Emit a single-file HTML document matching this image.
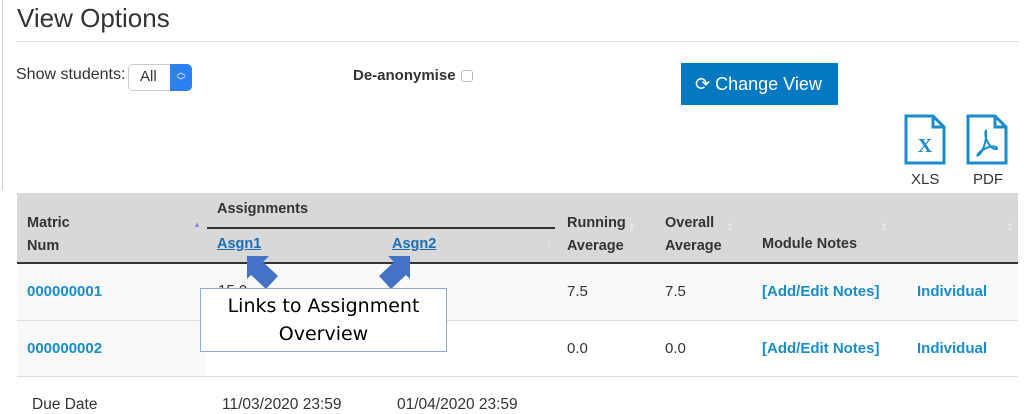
<!DOCTYPE html>
<html><head><meta charset="utf-8"><style>
*{margin:0;padding:0;box-sizing:border-box}
body{width:1024px;height:412px;background:#fff;font-family:"Liberation Sans",sans-serif;position:relative;overflow:hidden;color:#333}
.a{position:absolute;white-space:nowrap}
.lnk{color:#1a8ccc;font-weight:bold;font-size:15px}
.h{font-weight:bold;font-size:14.5px;color:#333}
.s{font-size:15px;color:#333}
</style></head><body>
<div class="a" style="left:2px;top:0;width:1px;height:190px;background:#ccc"></div>
<div class="a" style="left:17px;top:3px;font-size:26px;color:#333">View Options</div>
<div class="a" style="left:16px;top:41px;width:1003px;height:1px;background:#ddd"></div>
<div class="a s" style="left:16px;top:66px;font-size:16px">Show students:</div>
<div class="a" style="left:128px;top:64px;width:64px;height:27px;border:1px solid #ccc;border-radius:5px;background:#fff"></div>
<div class="a s" style="left:140px;top:68px">All</div>
<div class="a" style="left:170px;top:64px;width:22px;height:27px;background:#2d7ff5;border-radius:0 5px 5px 0;color:#fff;font-size:9px;text-align:center;line-height:9px;padding-top:4px">︿<br>﹀</div>
<div class="a h" style="left:353px;top:67px;font-size:15px">De-anonymise</div>
<div class="a" style="left:461px;top:70px;width:12px;height:12px;border:1px solid #bbb;border-radius:3px"></div>
<div class="a" style="left:681px;top:63px;width:157px;height:42px;background:#0479c1;color:#fff;font-size:18px;line-height:42px;padding-left:14px">⟳ Change View</div>
<svg class="a" style="left:903px;top:114px" width="44" height="52" viewBox="0 0 44 52"><path d="M3 2H30L41 13V49H3Z" fill="#fff" stroke="#1a8ccc" stroke-width="3"/><path d="M30 2V13H41" fill="none" stroke="#1a8ccc" stroke-width="3"/><text x="22" y="38" font-family="Liberation Serif" font-weight="bold" font-size="20" fill="#1a8ccc" text-anchor="middle">X</text></svg>
<svg class="a" style="left:965px;top:114px" width="44" height="52" viewBox="0 0 44 52"><path d="M3 2H30L41 13V49H3Z" fill="#fff" stroke="#1a8ccc" stroke-width="3"/><path d="M30 2V13H41" fill="none" stroke="#1a8ccc" stroke-width="3"/><path d="M21 16C19 22 22 28 26 33C30 36 34 36 31 33C28 31 18 34 13 40C11 43 14 42 17 37C19 33 22 26 21 16Z" fill="none" stroke="#1a8ccc" stroke-width="2"/></svg>
<div class="a s" style="left:911px;top:171px">XLS</div>
<div class="a s" style="left:973px;top:171px">PDF</div>
<div class="a" style="left:17px;top:193px;width:1001px;height:70px;background:#d8d8d8"></div>
<div class="a" style="left:17px;top:262px;width:1001px;height:2px;background:#333"></div>
<div class="a" style="left:17px;top:264px;width:1001px;height:56px;background:#f9f9f9"></div>
<div class="a" style="left:17px;top:320px;width:189px;height:56px;background:#f9f9f9"></div>
<div class="a" style="left:17px;top:320px;width:1001px;height:1px;background:#ddd"></div>
<div class="a" style="left:17px;top:376px;width:1001px;height:1px;background:#ddd"></div>
<div class="a h" style="left:27px;top:212px;line-height:23px">Matric<br>Num</div>
<div class="a" style="left:193px;top:220px;font-size:8px;color:#8d86e0">▲</div>
<div class="a h" style="left:217px;top:201px">Assignments</div>
<div class="a" style="left:207px;top:227px;width:348px;height:2px;background:#333"></div>
<div class="a lnk" style="left:217px;top:236px;color:#1a6fb8;text-decoration:underline;font-size:14.5px">Asgn1</div>
<div class="a lnk" style="left:392px;top:236px;color:#1a6fb8;text-decoration:underline;font-size:14.5px">Asgn2</div>
<div class="a h" style="left:567px;top:212px;line-height:23px">Running<br>Average</div>
<div class="a h" style="left:665px;top:212px;line-height:23px">Overall<br>Average</div>
<div class="a h" style="left:762px;top:236px">Module Notes</div>
<div class="a" style="left:628px;top:222px;color:#eee;font-size:9px">⇕</div>
<div class="a" style="left:726px;top:222px;color:#eee;font-size:9px">⇕</div>
<div class="a" style="left:880px;top:222px;color:#eee;font-size:9px">⇕</div>
<div class="a" style="left:1006px;top:222px;color:#eee;font-size:9px">⇕</div>
<div class="a" style="left:545px;top:240px;color:#e4e4e4;font-size:9px">⇕</div>
<div class="a lnk" style="left:27px;top:283px">000000001</div>
<div class="a lnk" style="left:27px;top:340px">000000002</div>
<div class="a s" style="left:567px;top:283px">7.5</div>
<div class="a s" style="left:665px;top:283px">7.5</div>
<div class="a s" style="left:567px;top:340px">0.0</div>
<div class="a s" style="left:665px;top:340px">0.0</div>
<div class="a lnk" style="left:762px;top:283px">[Add/Edit Notes]</div>
<div class="a lnk" style="left:917px;top:283px">Individual</div>
<div class="a lnk" style="left:762px;top:340px">[Add/Edit Notes]</div>
<div class="a lnk" style="left:917px;top:340px">Individual</div>
<div class="a s" style="left:218px;top:282px">15.0</div>
<div class="a s" style="left:32px;top:396px;font-size:15.5px">Due Date</div>
<div class="a s" style="left:222px;top:396px;font-size:15.5px">11/03/2020 23:59</div>
<div class="a s" style="left:397px;top:396px;font-size:15.5px">01/04/2020 23:59</div>
<svg class="a" style="left:0;top:0" width="1024" height="412"><path d="M247 256H269L263 262L278 276L266 289L251 275L247 279Z" fill="#4472c4"/><path d="M410 256H388L394 262L379 276L391 289L406 275L410 279Z" fill="#4472c4"/></svg>
<div class="a" style="left:200px;top:288px;width:247px;height:64px;background:#fff;border:1px solid #8faadc;font-family:'DejaVu Sans',sans-serif;font-size:19px;color:#000;text-align:center;line-height:28px;padding-top:3px">Links to Assignment<br>Overview</div>
</body></html>
